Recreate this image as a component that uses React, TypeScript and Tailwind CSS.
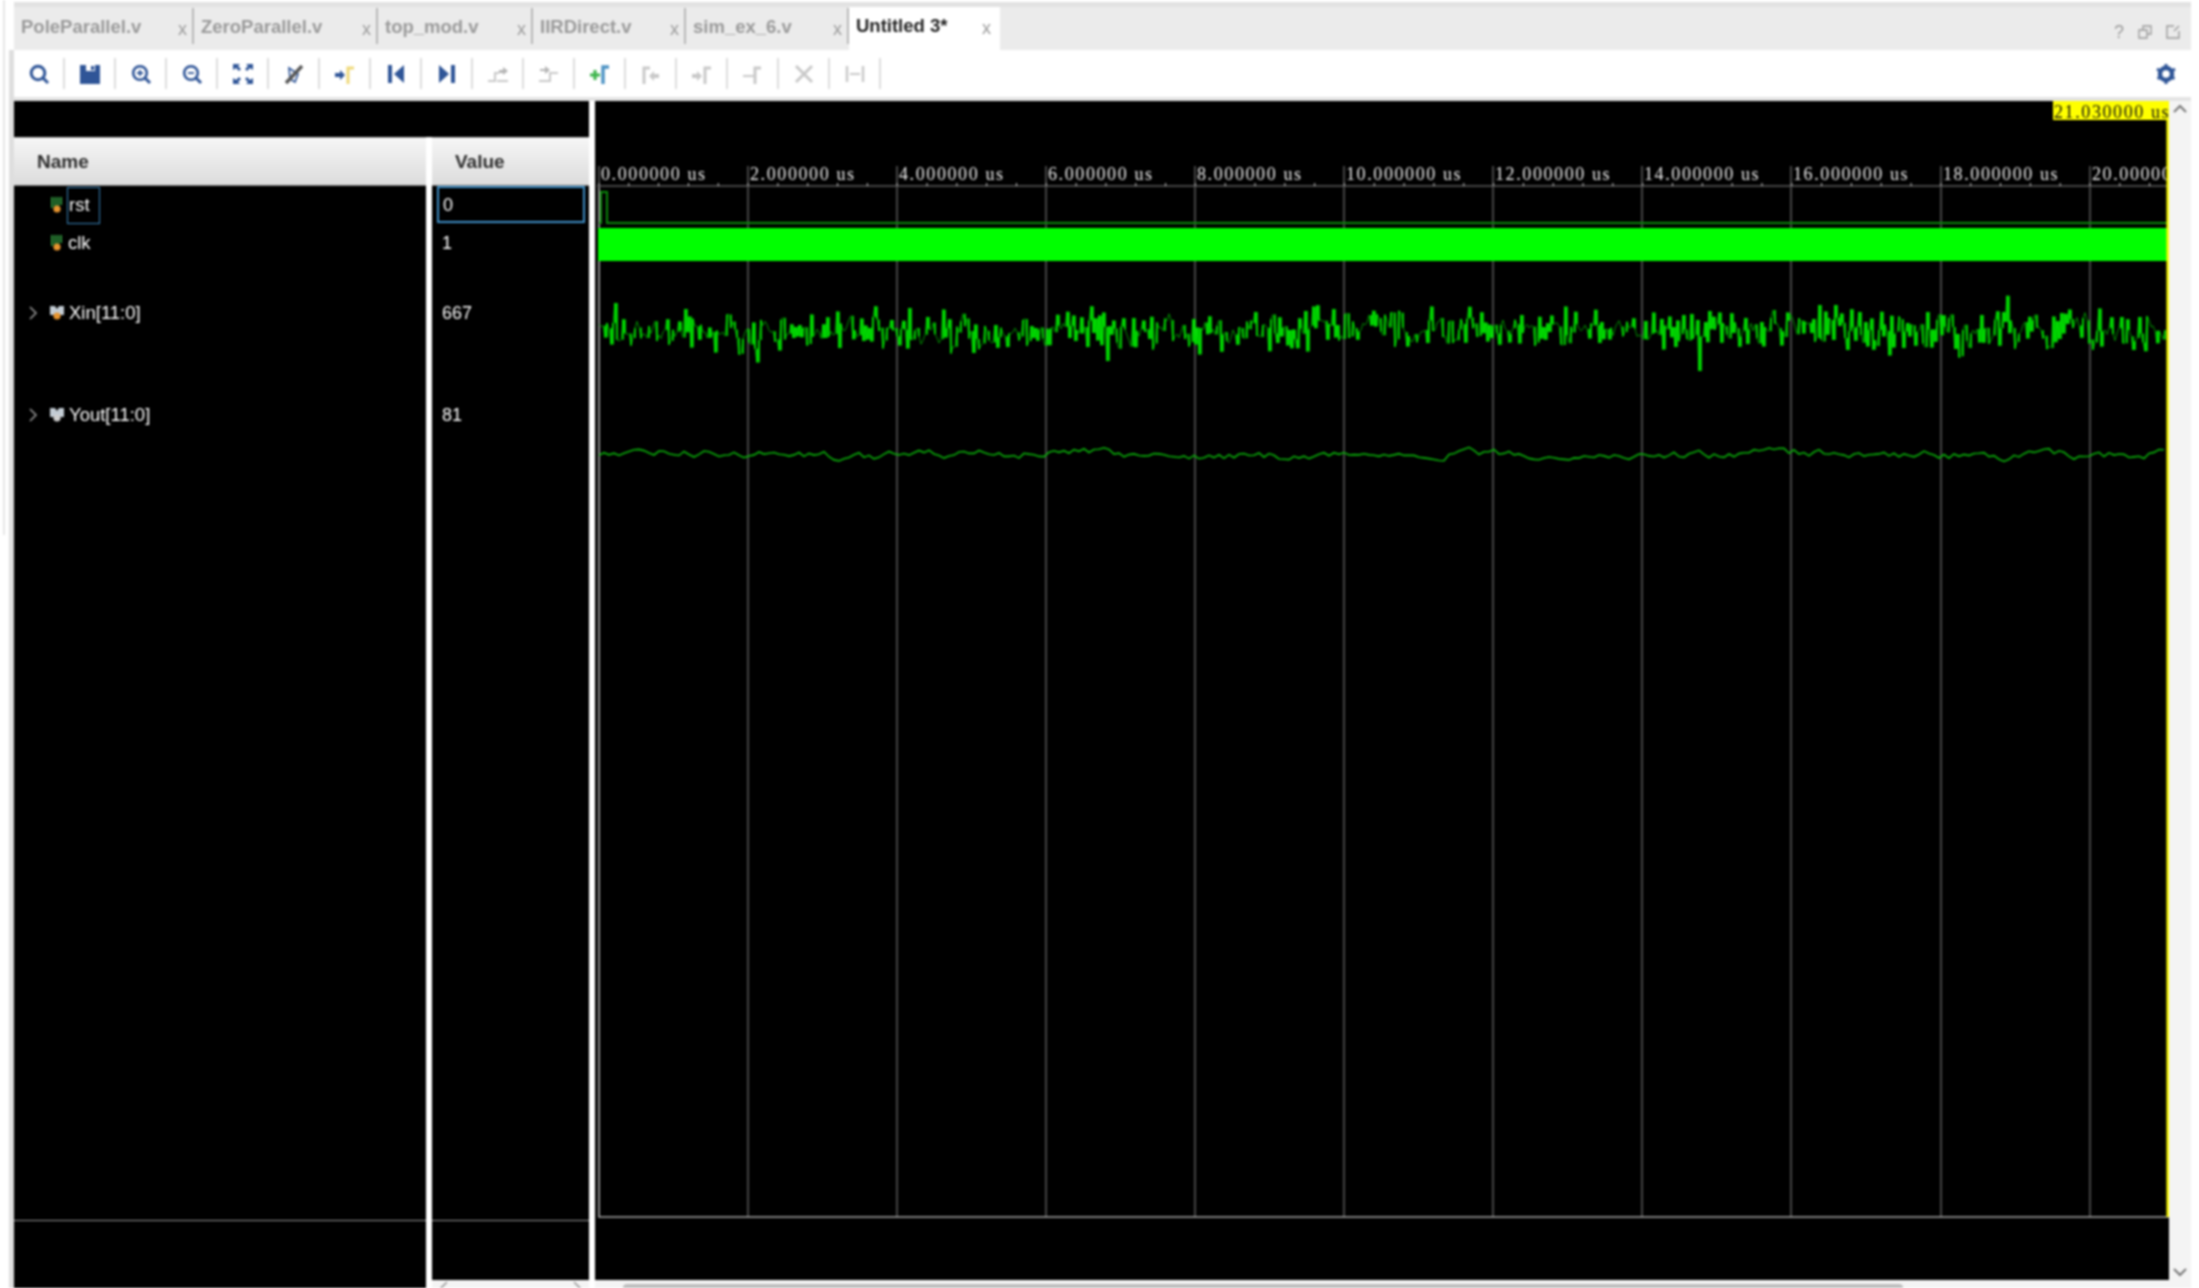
import type { ReactNode } from 'react';

const BLUE = '#2f5597';
const GREY = '#c9c9c9';

// grid lines of the wave window, 2 us apart
const gridXs = [599, 748, 897, 1046, 1195, 1344, 1493, 1642, 1791, 1941, 2090];
const ticks = Array.from({ length: 53 }, (_, i) => 599 + i * 29.82);

function noise(seed: number) {
  let s = seed;
  return () => {
    s = (s * 1664525 + 1013904223) % 4294967296;
    return s / 4294967296;
  };
}

// Xin is dense noise: bright vertical strokes over a faint trace
function makeXin() {
  const r = noise(77);
  let bars = '';
  const pts: string[] = [];
  let prev = 330;
  for (let x = 599; x < 2166; x += 2) {
    const spike = r() < 0.07 ? 29 : 16;
    const y = 330 + (r() + r() - 1) * spike * 1.5 + Math.sin(x / 37) * 2;
    pts.push(`${x},${y.toFixed(1)}`);
    if (Math.abs(y - prev) > 8) {
      bars += `M${x} ${prev.toFixed(1)}V${y.toFixed(1)}`;
    }
    prev = y;
  }
  return { bars, trace: pts.join(' ') };
}

function makeYout() {
  const r = noise(1234);
  const pts: string[] = [];
  let v = 0;
  for (let x = 599; x < 2166; x += 5) {
    v = v * 0.62 + (r() - 0.5) * 7;
    const y = 454.5 + v + Math.sin(x / 61) * 1.5;
    pts.push(`${x},${y.toFixed(1)}`);
  }
  return pts.join(' ');
}

const xin = makeXin();
const youtPts = makeYout();

function Icon({ children }: { children: ReactNode }) {
  return (
    <svg width="24" height="24" viewBox="0 0 24 24" fill="none">
      {children}
    </svg>
  );
}

const toolIcons: ReactNode[] = [
  <Icon>
    <circle cx="11" cy="11" r="6.8" stroke={BLUE} strokeWidth="3" />
    <path d="M16 16l5 5" stroke={BLUE} strokeWidth="3" />
  </Icon>,
  <Icon>
    <path d="M2 3h20v19H2z" fill={BLUE} />
    <path d="M8 3h9v6H8z" fill="#fff" />
    <path d="M13 4h3v4h-3z" fill={BLUE} />
  </Icon>,
  <Icon>
    <circle cx="11" cy="11" r="6.8" stroke={BLUE} strokeWidth="2.6" />
    <path d="M16 16l5 5" stroke={BLUE} strokeWidth="3" />
    <path d="M8 11h6M11 8v6" stroke={BLUE} strokeWidth="1.8" />
  </Icon>,
  <Icon>
    <circle cx="11" cy="11" r="6.8" stroke={BLUE} strokeWidth="2.6" />
    <path d="M16 16l5 5" stroke={BLUE} strokeWidth="3" />
    <path d="M8 11h6" stroke={BLUE} strokeWidth="1.8" />
  </Icon>,
  <Icon>
    <path
      d="M2 2h7L7 4l3 3-2 2-3-3-3 2zM22 2h-7l2 2-3 3 2 2 3-3 3 2zM2 22h7l-2-2 3-3-2-2-3 3-3-2zM22 22h-7l2-2-3-3 2-2 3 3 3-2z"
      fill={BLUE}
    />
  </Icon>,
  <Icon>
    <path d="M7 6l9 6-3 8-5-3z" stroke={BLUE} strokeWidth="1.6" />
    <path d="M4 21L20 4" stroke="#555" strokeWidth="3.4" />
  </Icon>,
  <Icon>
    <path d="M15 22V6h6" stroke="#efd97a" strokeWidth="3" />
    <path d="M2 11h5V8l5 5-5 5v-3H2z" fill={BLUE} />
  </Icon>,
  <Icon>
    <path d="M4 3h4v18H4z" fill={BLUE} />
    <path d="M20 3v18l-10-9z" fill={BLUE} />
  </Icon>,
  <Icon>
    <path d="M16 3h4v18h-4z" fill={BLUE} />
    <path d="M4 3v18l10-9z" fill={BLUE} />
  </Icon>,
  <Icon>
    <path d="M2 19h7v-8h4" stroke={GREY} strokeWidth="2" />
    <path d="M13 8h4V5l5 4-5 4v-2h-4z" fill="#b5b5b5" />
    <path d="M11 19h11" stroke={GREY} strokeWidth="2" />
  </Icon>,
  <Icon>
    <path d="M2 19h11v-8h8" stroke={GREY} strokeWidth="2" />
    <path d="M3 7h5V4l5 4-5 4V9H3z" fill="#b5b5b5" />
  </Icon>,
  <Icon>
    <path d="M15 22V5h6" stroke="#4d93c4" strokeWidth="3.4" />
    <path d="M2 13h10M7 8v10" stroke="#3cb44a" strokeWidth="3" />
  </Icon>,
  <Icon>
    <path d="M5 22V6h6" stroke={GREY} strokeWidth="3" />
    <path d="M20 12h-5V9l-5 5 5 5v-3h5z" fill={GREY} />
  </Icon>,
  <Icon>
    <path d="M15 22V6h6" stroke={GREY} strokeWidth="3" />
    <path d="M2 12h5V9l5 5-5 5v-3H2z" fill={GREY} />
  </Icon>,
  <Icon>
    <path d="M14 22V6h6" stroke={GREY} strokeWidth="3" />
    <path d="M2 14h12" stroke={GREY} strokeWidth="2" />
  </Icon>,
  <Icon>
    <path d="M4 4l16 16M20 4L4 20" stroke={GREY} strokeWidth="3" />
  </Icon>,
  <Icon>
    <path d="M4 4v16M20 4v16" stroke={GREY} strokeWidth="2.5" />
    <path d="M7 12h10" stroke={GREY} strokeWidth="2" />
  </Icon>,
];

const tabs = [
  { name: 'PoleParallel.v', w: 'w-[180px]' },
  { name: 'ZeroParallel.v', w: 'w-[184px]' },
  { name: 'top_mod.v', w: 'w-[155px]' },
  { name: 'IIRDirect.v', w: 'w-[153px]' },
  { name: 'sim_ex_6.v', w: 'w-[163px]' },
];

function ScalarIcon() {
  return (
    <svg width="14" height="18" viewBox="0 0 14 18" className="ml-[15px] mr-[5px]">
      <path d="M3 1v11M6 1v11" stroke="#2f8f3a" strokeWidth="2" />
      <path d="M9 1v11M12 1v8" stroke="#2f8f3a" strokeWidth="2" />
      <circle cx="8" cy="13" r="3.6" fill="#e8952f" />
    </svg>
  );
}

function BusIcon({ dot }: { dot: string }) {
  return (
    <svg width="16" height="16" viewBox="0 0 16 16" className="ml-[10px] mr-[4px]">
      <path d="M1 1h5l2 3 2-3h5v9H1z" fill="#c3ccd4" />
      <circle cx="8" cy="11" r="3.6" fill={dot} />
    </svg>
  );
}

function Chevron({ className }: { className: string }) {
  return (
    <svg width="12" height="16" viewBox="0 0 12 16" fill="none" className={className}>
      <path d="M3 2l6 6-6 6" stroke="#999" strokeWidth="1.6" />
    </svg>
  );
}

function WaveView() {
  return (
    <svg viewBox="595 101 1574 1179" className="block w-[1574px] h-[1179px]">
      {gridXs.map((x) => (
        <path key={x} d={`M${x} 187V1217`} stroke="#5c5c5c" strokeWidth="1.5" />
      ))}
      <path d="M599 187V1217H2169" stroke="#a8a8a8" strokeWidth="1.5" fill="none" />
      {/* ruler */}
      <path d="M597 186H2167" stroke="#8a8a8a" strokeWidth="1" />
      {ticks.map((x) => (
        <path key={x} d={`M${x} 183V186`} stroke="#d0d0d0" strokeWidth="1" />
      ))}
      {gridXs.map((x, i) => (
        <g key={x}>
          <path d={`M${x} 166V186`} stroke="#8a8a8a" strokeWidth="1" />
          <text x={x + 2} y="180" fill="#ececec" fontFamily="'Liberation Serif', serif" fontSize="18" letterSpacing="1.6">
            {`${i * 2}.${i === 10 ? '00000' : '000000 us'}`}
          </text>
        </g>
      ))}
      {/* rst */}
      <path d="M599 223H601V192H607V223H2167" stroke="#0a8a0a" strokeWidth="2" fill="none" />
      {/* clk */}
      <rect x="598" y="228" width="1570" height="33" fill="#00ff00" />
      {/* Xin, Yout */}
      <polyline points={xin.trace} stroke="#00a000" strokeWidth="0.9" fill="none" />
      <path d={xin.bars} stroke="#00ff00" strokeWidth="1.5" fill="none" />
      <polyline points={youtPts} stroke="#0ab00a" strokeWidth="1.6" fill="none" />
      {/* cursor */}
      <path d="M2168 101V1217" stroke="#ffff00" strokeWidth="3" />
      <rect x="2053" y="101" width="115" height="19" fill="#ffff00" />
      <text x="2054" y="118" fill="#111" fontFamily="'Liberation Serif', serif" fontSize="18" letterSpacing="1.6">
        21.030000 us
      </text>
    </svg>
  );
}

export default function App() {
  return (
    <div className="flex w-[2199px] h-[1288px] overflow-hidden bg-white blur-[0.8px] font-['Liberation_Sans',Arial,sans-serif]">
      {/* left gutter */}
      <div className="w-[14px] shrink-0 flex pl-[3px]">
        <div className="w-[2px] h-[535px] bg-[#e6e6e6]" />
        <div className="w-[5px] ml-[4px] bg-[#dedede] mt-[50px]" />
      </div>

      <div className="w-[2177px] shrink-0 flex flex-col">
        <div className="h-[7px] shrink-0 pt-[2px]">
          <div className="h-[5px] bg-[#e2e2e2]" />
        </div>

        {/* Tabs */}
        <div className="h-[43px] shrink-0 flex bg-[#ebebeb]">
          {tabs.map((t) => (
            <div key={t.name} className={`${t.w} h-[36px] mt-[1px] pl-[7px] pr-[5px] flex items-center justify-between border-r-2 border-[#b8b8b8] text-[#9a9a9a]`}>
              <span className="text-[18.5px] font-bold leading-none mt-[2px]">{t.name}</span>
              <span className="text-[18px] mt-[5px] leading-none">x</span>
            </div>
          ))}
          <div className="w-[151px] pl-[7px] pr-[9px] flex items-center justify-between bg-white pb-[1px]">
            <span className="text-[18.5px] font-bold leading-none text-[#222] -mt-[3px]">Untitled 3*</span>
            <span className="text-[18px] text-[#999] leading-none">x</span>
          </div>
          <div className="flex-1 flex items-center justify-end gap-[14px] pr-[11px] pt-[7px] text-[#999]">
            <span className="text-[18px] leading-none">?</span>
            <svg width="14" height="14" viewBox="0 0 14 14" fill="none" stroke="#999" strokeWidth="1.3">
              <path d="M1 5h8v8H1zM5 5V1h8v8H9" />
            </svg>
            <svg width="14" height="14" viewBox="0 0 14 14" fill="none" stroke="#999" strokeWidth="1.4">
              <path d="M8 1H1v12h12V6M8 6l5-5" />
            </svg>
          </div>
        </div>

        {/* Toolbar */}
        <div className="h-[47px] shrink-0 flex items-center bg-white pr-[15px]">
          {toolIcons.map((icon, i) => (
            <div key={i} className="w-[51px] h-[31px] flex items-center justify-center border-r-[2px] border-[#dddddd]">
              {icon}
            </div>
          ))}
          <svg width="20" height="22" viewBox="0 0 20 22" className="ml-auto">
            <circle cx="10" cy="11" r="6" fill="none" stroke={BLUE} strokeWidth="4.5" />
            <path d="M10 1v20M1 6l18 10M19 6L1 16" stroke={BLUE} strokeWidth="3" strokeDasharray="4 12" />
          </svg>
        </div>
        <div className="h-[4px] shrink-0 bg-[#e4e4e4]" />

        <div className="flex-1 flex min-h-0">
          {/* Name and value */}
          <div className="w-[575px] shrink-0 flex flex-col">
            <div className="h-[36px] shrink-0 bg-black" />
            <div className="flex-1 flex gap-[6px] min-h-0">
              <div className="w-[412px] flex flex-col bg-black text-[18.5px] text-white">
                <div className="h-[49px] shrink-0 pl-[23px] pt-[2px] flex items-center text-[19px] font-bold text-[#2c2c2c] bg-gradient-to-b from-[#f6f6f6] to-[#dcdcdc] border-t border-[#bbbbbb] border-b border-b-[#777777]">
                  Name
                </div>
                <div className="h-[38px] shrink-0 flex items-center pl-[20px]">
                  <ScalarIcon />
                  <span className="h-[37px] flex items-center border border-[#3a85bb] px-[1px] w-[33px] -ml-[1px]">rst</span>
                </div>
                <div className="h-[38px] shrink-0 flex items-center pl-[20px]">
                  <ScalarIcon />
                  <span>clk</span>
                </div>
                <div className="h-[102px] shrink-0 flex items-center pl-[13px]">
                  <Chevron className="" />
                  <BusIcon dot="#e8952f" />
                  <span>Xin[11:0]</span>
                </div>
                <div className="h-[102px] shrink-0 flex items-center pl-[13px]">
                  <Chevron className="" />
                  <BusIcon dot="#cfcfcf" />
                  <span>Yout[11:0]</span>
                </div>
                <div className="flex-1 border-b border-[#9a9a9a]" />
                <div className="h-[67px] shrink-0" />
              </div>

              <div className="w-[157px] flex flex-col text-[18px] text-white">
                <div className="h-[49px] shrink-0 pl-[23px] pt-[2px] flex items-center text-[19px] font-bold text-[#2c2c2c] bg-gradient-to-b from-[#f6f6f6] to-[#dcdcdc] border-t border-[#bbbbbb] border-b border-b-[#777777]">
                  Value
                </div>
                <div className="flex-1 flex flex-col bg-black min-h-0">
                  <div className="h-[38px] shrink-0 pl-[5px] pr-[4px]">
                    <div className="h-[37px] flex items-center border-2 border-[#3f90c8] pl-[4px] pt-[1px]">0</div>
                  </div>
                  <div className="h-[38px] shrink-0 flex items-center pl-[10px]">1</div>
                  <div className="h-[102px] shrink-0 flex items-center pl-[10px]">667</div>
                  <div className="h-[102px] shrink-0 flex items-center pl-[10px]">81</div>
                  <div className="flex-1 border-b border-[#9a9a9a]" />
                  <div className="h-[59px] shrink-0" />
                </div>
                <div className="h-[8px] shrink-0 bg-[#f4f4f4] flex justify-between px-[6px]">
                  <Chevron className="rotate-180" />
                  <Chevron className="" />
                </div>
              </div>
            </div>
          </div>

          <div className="w-[6px] shrink-0 bg-white" />

          {/* Waves */}
          <div className="w-[1574px] shrink-0 flex flex-col">
            <div className="h-[1179px] shrink-0 bg-black">
              <WaveView />
            </div>
            <div className="h-[8px] shrink-0 bg-[#f4f4f4] flex items-end pl-[28px]">
              <div className="w-[1280px] h-[4px] bg-[#bdbdbd] rounded-t-sm" />
            </div>
          </div>

          {/* Vertical scrollbar */}
          <div className="w-[22px] shrink-0 bg-[#f4f4f4] flex flex-col justify-between items-center pt-[2px] pb-[10px]">
            <svg width="16" height="12" viewBox="0 0 16 12" fill="none">
              <path d="M2 9l6-6 6 6" stroke="#777" strokeWidth="2" />
            </svg>
            <svg width="16" height="12" viewBox="0 0 16 12" fill="none">
              <path d="M2 3l6 6 6-6" stroke="#777" strokeWidth="2" />
            </svg>
          </div>
        </div>
      </div>
    </div>
  );
}
